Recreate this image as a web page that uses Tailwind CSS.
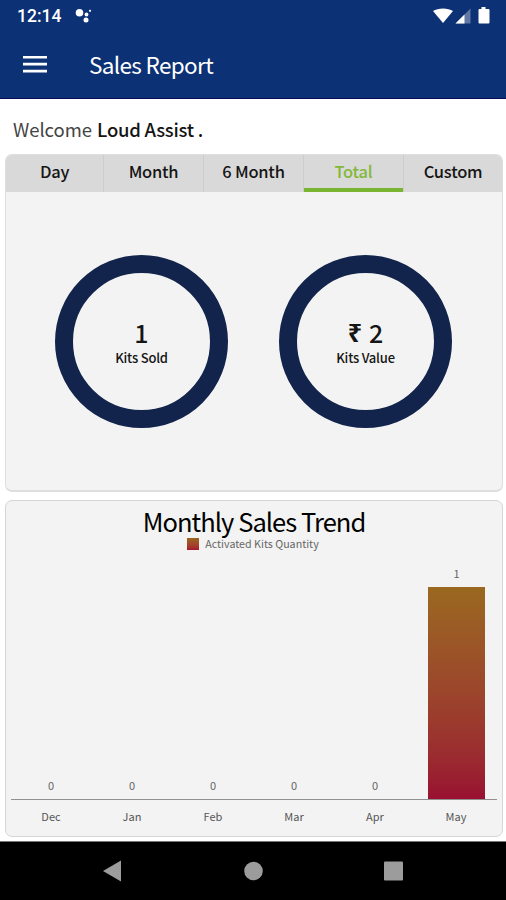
<!DOCTYPE html>
<html lang="en">
<head>
  <meta charset="UTF-8" />
  <meta name="viewport" content="width=device-width, initial-scale=1.0"/>
  <title>Sales Report</title>
  <script src="https://cdn.jsdelivr.net/npm/@tailwindcss/browser@4"></script>
</head>
<body class="flex h-[900px] w-[506px] flex-col overflow-hidden bg-white font-['Noto_Sans_CJK_SC','Noto_Sans',sans-serif] text-[#151515]">

  <!-- Status bar + toolbar -->
  <header class="h-[99px] shrink-0 border-b border-[#0b0b55] bg-[#0d3175] text-white">
    <div class="flex h-8 items-center pr-[16px] pl-[17px]">
      <span class="font-['Roboto',sans-serif] text-[17.5px] leading-8 font-medium">12:14</span>
      <svg class="ml-[14px] h-4 w-[17px]" viewBox="0 0 17 16" fill="#fff">
        <circle cx="4.500" cy="4.800" r="3.8"/>
        <circle cx="11.500" cy="6.500" r="1.9"/>
        <circle cx="11" cy="12" r="2.500"/>
        <circle cx="15" cy="2.800" r="1.1"/>
      </svg>
      <svg class="ml-auto h-5 w-[57px]" viewBox="0 0 57 20" fill="#fff">
        <path d="M0 5C5 1.500 15 1.500 20 5L10 17Z"/>
        <path d="M22.500 17.500L37.500 2.500V17.500Z" fill-opacity=".35"/>
        <path d="M22.500 17.500L31.500 8.500V17.500Z"/>
        <path d="M48.500 1h4v2H55.500a1 1 0 0 1 1 1V16.500a1 1 0 0 1-1 1H46.500a1 1 0 0 1-1-1V4a1 1 0 0 1 1-1h2Z"/>
      </svg>
    </div>
    <div class="flex h-[66px] items-center pl-[23px]">
      <svg class="h-[18px] w-6 shrink-0" viewBox="0 0 24 18" fill="#fff">
        <path d="M0 0h24v2.600H0zM0 6.800h24v2.600H0zM0 13.800h24v2.600H0z"/>
      </svg>
      <h1 class="mb-[2px] ml-[42px] text-[22.5px] leading-[30px] tracking-[-0.65px]">Sales Report</h1>
    </div>
  </header>

  <p class="mt-[15px] mb-[10px] ml-[13px] h-[30px] text-[18.5px] leading-[30px] tracking-[-0.05px] text-[#444]">Welcome <span class="ml-px font-medium tracking-[-0.25px] text-[#151515]">Loud Assist .</span></p>

  <!-- Totals -->
  <section class="mr-[3px] ml-[5px] flex h-[338px] shrink-0 flex-col overflow-hidden rounded-[7px] border border-b-2 border-[#dedede] bg-[#f3f3f3]">
    <nav class="grid h-[37px] shrink-0 grid-cols-[98px_100px_100px_99px_1fr] bg-[#d9d9d9] text-center text-[16.5px] leading-[33px] font-medium tracking-[-0.25px]">
      <a class="border-r border-[#cdcdcd]">Day</a>
      <a class="border-r border-[#cdcdcd]">Month</a>
      <a class="border-r border-[#cdcdcd]">6 Month</a>
      <a class="border-b-4 border-[#79b530] text-[#82b83a]">Total</a>
      <a class="border-l border-[#cdcdcd]">Custom</a>
    </nav>
    <div class="flex gap-[51px] pt-[63px] pl-[49px]">
      <div class="flex size-[173px] flex-col items-center rounded-full border-[18px] border-[#12244b] pt-[44px]">
        <span class="text-[25px] leading-[30px] font-medium">1</span>
        <span class="mt-[2px] text-[13px] leading-[18px] font-medium tracking-[-0.2px]">Kits Sold</span>
      </div>
      <div class="flex size-[173px] flex-col items-center rounded-full border-[18px] border-[#12244b] pt-[44px]">
        <span class="flex items-center gap-[7px] text-[25px] leading-[30px] font-medium"><b class="font-['Noto_Sans',sans-serif] text-[25px] font-bold">₹</b>2</span>
        <span class="mt-[2px] text-[13px] leading-[18px] font-medium tracking-[-0.2px]">Kits Value</span>
      </div>
    </div>
  </section>

  <!-- Monthly chart -->
  <section class="mt-2 mr-[3px] ml-[5px] h-[337px] shrink-0 rounded-[7px] border border-[#d6d6d6] bg-[#f3f3f3] px-[5px]">
    <h2 class="mt-[4px] mb-[1px] text-center text-[25.5px] leading-8 tracking-[-0.95px] text-black">Monthly Sales Trend</h2>
    <div class="flex h-3 items-center justify-center gap-[6px] pr-[2px] text-[10.7px] leading-3 text-[#666]">
      <i class="size-3 bg-linear-to-b from-[#9a661f] to-[#a61430]"></i>
      <span>Activated Kits Quantity</span>
    </div>
    <div class="grid h-[250px] grid-cols-6 items-end border-b border-[#909090] text-center text-[11px] leading-[14px] text-[#666]">
      <span class="pr-px pb-[7px]">0</span>
      <span class="pr-px pb-[7px]">0</span>
      <span class="pr-px pb-[7px]">0</span>
      <span class="pr-px pb-[7px]">0</span>
      <span class="pr-px pb-[7px]">0</span>
      <div class="flex flex-col items-center">
        <span class="pb-[7px]">1</span>
        <div class="h-[212px] w-[57px] bg-linear-to-b from-[#9a681f] to-[#990f31]"></div>
      </div>
    </div>
    <div class="grid grid-cols-6 pt-[9px] text-center text-[11px] leading-[14px] text-[#555]">
      <span class="pr-px">Dec</span>
      <span class="pr-px">Jan</span>
      <span class="pr-px">Feb</span>
      <span class="pr-px">Mar</span>
      <span class="pr-px">Apr</span>
      <span class="pr-px">May</span>
    </div>
  </section>

  <!-- Android navigation -->
  <footer class="mt-auto h-[59px] shrink-0 border-t border-[#777] bg-black">
    <svg class="h-[58px] w-[506px]" viewBox="0 0 506 58" fill="#9c9c9c">
      <path d="M103 29L121 18.500V39.500Z"/>
      <circle cx="253.500" cy="29" r="9.300"/>
      <rect x="384" y="19.500" width="19" height="19" rx="1"/>
    </svg>
  </footer>
</body>
</html>
